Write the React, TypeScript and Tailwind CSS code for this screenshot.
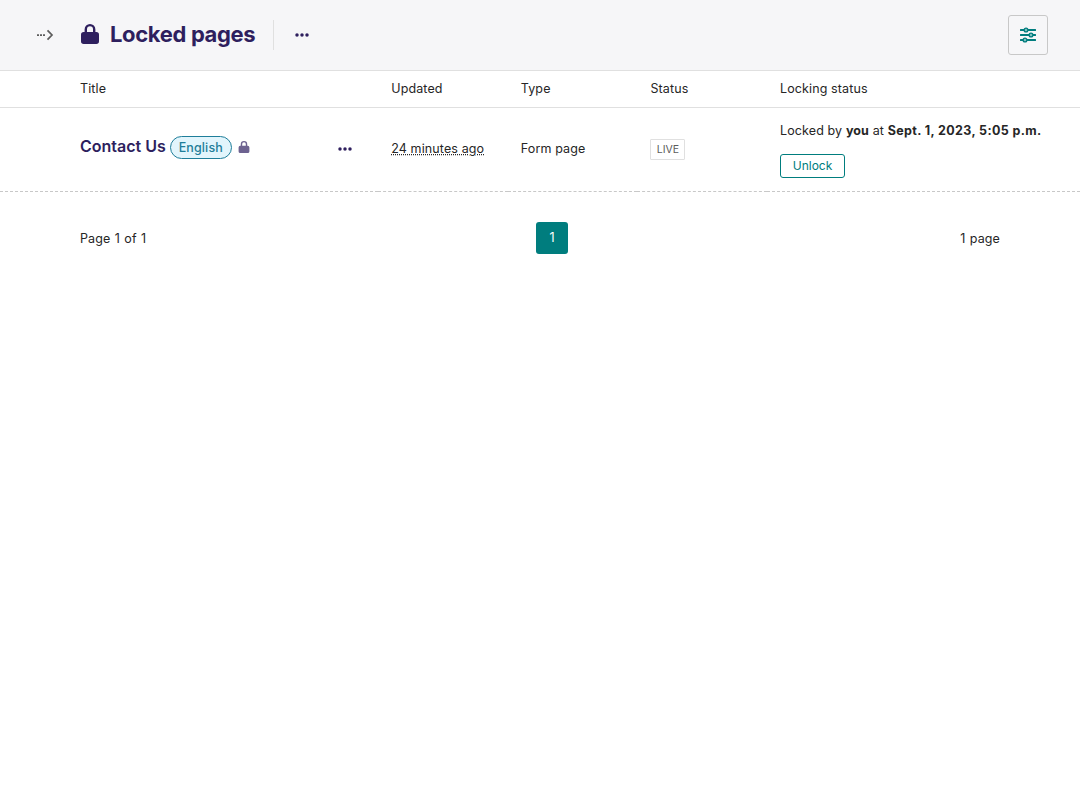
import React from "react";

function LockIcon({ className }: { className?: string }) {
  return (
    <svg viewBox="0 0 18 20" className={className} fill="currentColor" aria-hidden="true">
      <path
        fillRule="evenodd"
        d="M3.6 8V5.4a5.4 5.4 0 0 1 10.8 0V8h.9A2.7 2.7 0 0 1 18 10.7v6.6a2.7 2.7 0 0 1-2.7 2.7H2.7A2.7 2.7 0 0 1 0 17.3v-6.6A2.7 2.7 0 0 1 2.7 8ZM6 8h6V5.2a3 3 0 0 0-6 0Z"
      />
    </svg>
  );
}

function DotsIcon() {
  return (
    <svg viewBox="0 0 14 4" className="h-1 w-3.5" fill="currentColor" aria-hidden="true">
      <circle cx="2" cy="2" r="1.75" />
      <circle cx="7" cy="2" r="1.75" />
      <circle cx="12" cy="2" r="1.75" />
    </svg>
  );
}

function BreadcrumbExpandIcon() {
  return (
    <svg viewBox="0 0 18 12" className="h-3 w-[18px]" aria-hidden="true">
      <path d="M1 5.200h2v1.800H1zM4 5.200h2v1.800H4zM7 5.200h2v1.800H7z" fill="currentColor" />
      <path d="M11.500 1.300 16 6l-4.500 4.700" fill="none" stroke="currentColor" strokeWidth="1.700" />
    </svg>
  );
}

function SlidersIcon() {
  return (
    <svg viewBox="0 0 16 16" className="size-4" stroke="currentColor" aria-hidden="true">
      <path d="M.8 3h14.400M.8 8h14.400M.8 13h14.400" strokeWidth="2" strokeLinecap="round" />
      <g fill="#7fbfbf" strokeWidth="1.300">
        <circle cx="6" cy="3" r="1.900" />
        <circle cx="11" cy="8" r="1.900" />
        <circle cx="5" cy="13" r="1.900" />
      </g>
    </svg>
  );
}

const th = "px-[13px] pb-px text-left align-middle font-normal";
const td = "border-b border-dashed border-[#c8c8c8] px-[13px]";

export default function App() {
  return (
    <div className="min-h-screen bg-white font-['Inter',sans-serif] text-[12.5px] leading-[19.5px] tracking-[0.12px] text-[#262626]">
      <header className="flex h-[71px] items-center border-b border-[#e0e0e0] bg-[#f6f6f8] pr-8 pl-9 text-[#2e1f5e]">
        <button className="text-[#5c5c5c]">
          <BreadcrumbExpandIcon />
        </button>
        <h1 className="ml-[27px] flex w-[174px] items-center pb-0.5 text-[22px] leading-7 font-bold whitespace-nowrap">
          <LockIcon className="mr-[11px] h-5 w-[18px] shrink-0" />
          <span className="tracking-[-0.35px]">Locked pages</span>
        </h1>
        <div className="ml-[18px] h-[30px] w-px bg-[#e0e0e0]" />
        <button className="ml-[21px]">
          <DotsIcon />
        </button>
        <button className="ml-auto flex size-10 items-center justify-center rounded-[3px] border border-[#c8c8c8] text-[#007d7e]">
          <SlidersIcon />
        </button>
      </header>

      <main>
        <table className="w-full table-fixed border-collapse">
          <colgroup>
            <col />
            <col className="w-[12%]" />
            <col className="w-[12%]" />
            <col className="w-[12%]" />
            <col className="w-[313px]" />
          </colgroup>
          <thead>
            <tr className="h-9 border-b border-[#e0e0e0]">
              <th className={`${th} pl-20`}>Title</th>
              <th className={th}>Updated</th>
              <th className={th}>Type</th>
              <th className={th}>Status</th>
              <th className={th}>Locking status</th>
            </tr>
          </thead>
          <tbody>
            <tr className="h-[84px]">
              <td className={`${td} pl-20`}>
                <div className="flex items-center text-[#2e1f5e]">
                  <a className="-mt-[7px] text-[16px] leading-6 font-semibold tracking-normal">Contact Us</a>
                  <span className="-mt-1 ml-1 flex h-[23px] w-[62px] items-center justify-center rounded-full border border-[#1f7e9a] bg-[#e2f5fc] pt-0.5 font-medium text-[#1f7e9a]">
                    English
                  </span>
                  <LockIcon className="-mt-1 ml-1.5 h-3 w-3 text-[#6d6290]" />
                  <button className="mr-[13px] ml-auto">
                    <DotsIcon />
                  </button>
                </div>
              </td>
              <td className={td}>
                <span className="underline decoration-dotted">24 minutes ago</span>
              </td>
              <td className={td}>Form page</td>
              <td className={td}>
                <span className="flex h-[21px] w-[35px] items-center justify-center rounded-[1px] border border-[#e0e0e0] pt-px text-[10.5px] tracking-normal text-[#5c5c5c]">
                  LIVE
                </span>
              </td>
              <td className={`${td} pr-0`}>
                <p className="pt-px whitespace-nowrap">
                  Locked by <b className="font-bold">you</b> at{" "}
                  <b className="font-bold tracking-[0.38px]">Sept. 1, 2023, 5:05 p.m.</b>
                </p>
                <button className="mt-[13px] flex h-6 w-[65px] items-center justify-center rounded-[3px] border border-[#007d7e] pb-px text-[12px] tracking-normal text-[#007d7e]">
                  Unlock
                </button>
              </td>
            </tr>
          </tbody>
        </table>

        <nav className="mt-[30px] flex items-center justify-between pr-20 pl-20">
          <span className="w-[68px] pt-0.5 whitespace-nowrap [word-spacing:0.7px]">Page 1 of 1</span>
          <span className="flex size-8 items-center justify-center rounded-[3px] bg-[#007d7e] pt-px text-white">1</span>
          <span className="w-11 pt-0.5 text-right whitespace-nowrap [word-spacing:0.8px]">1 page</span>
        </nav>
      </main>
    </div>
  );
}
